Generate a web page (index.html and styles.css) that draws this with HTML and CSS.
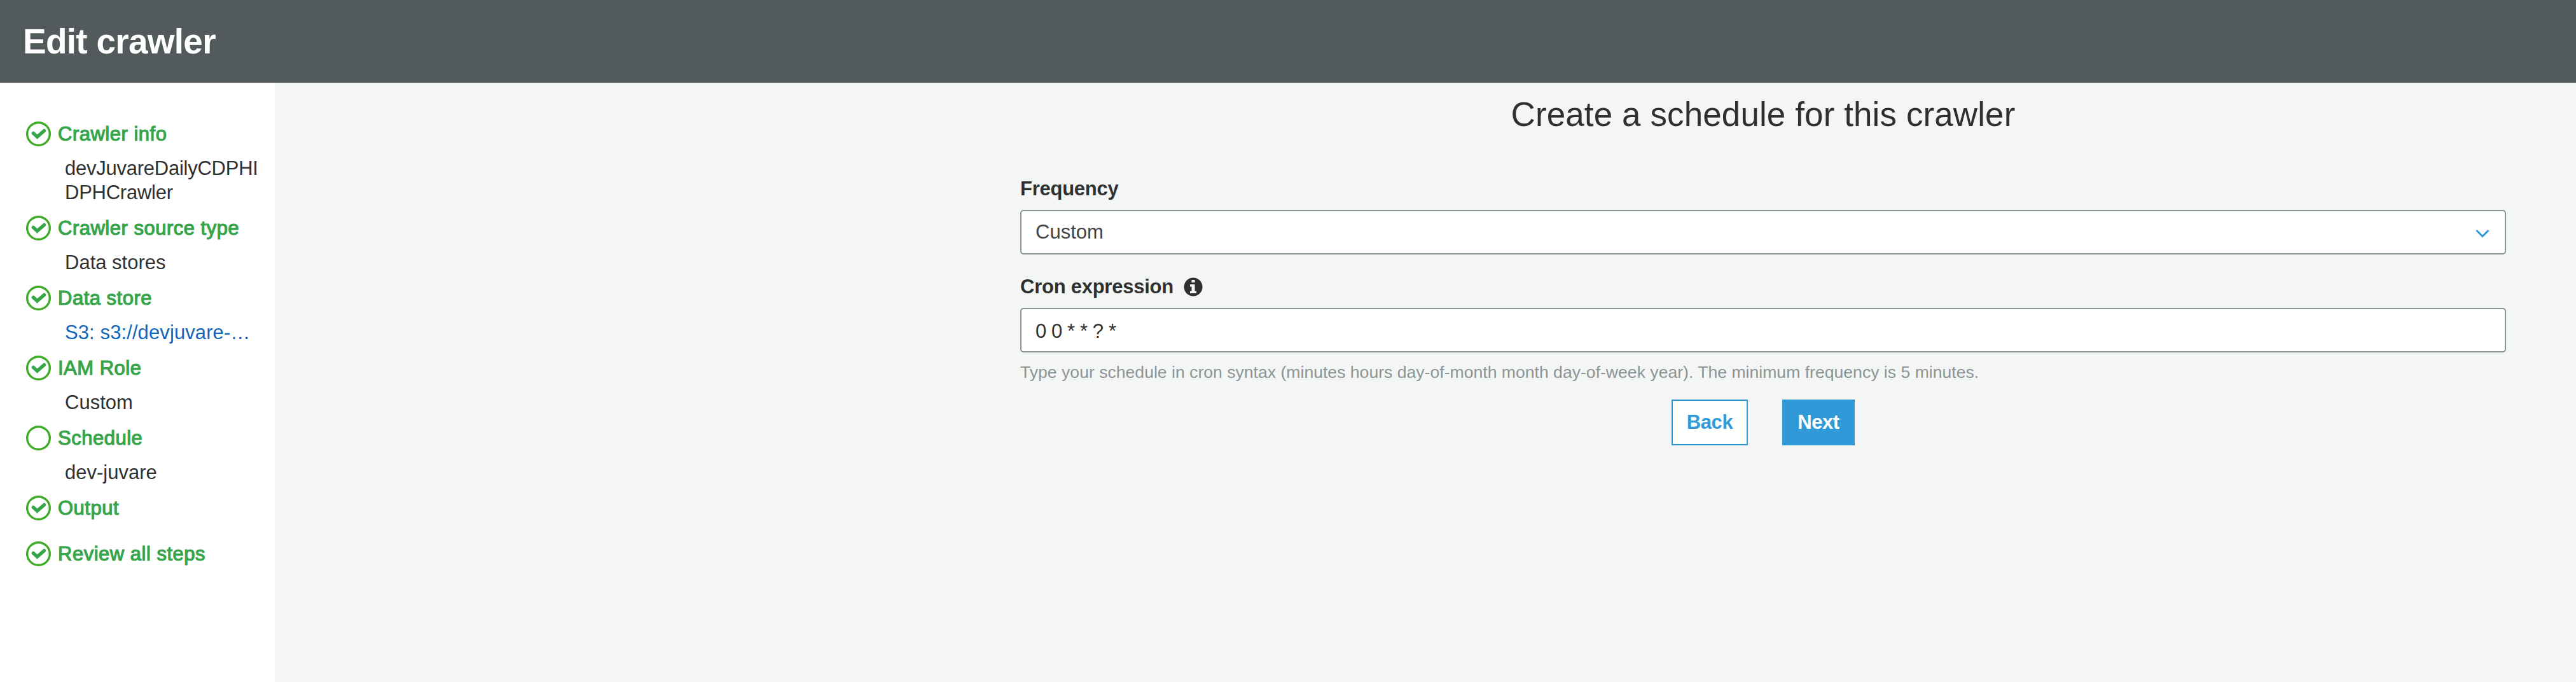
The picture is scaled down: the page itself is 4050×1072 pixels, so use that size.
FILE: index.html
```html
<!DOCTYPE html>
<html lang="en">
<head>
<meta charset="utf-8">
<title>Edit crawler</title>
<link rel="stylesheet" href="styles.css">
</head>
<body>
<svg class="sprite" width="0" height="0" aria-hidden="true">
  <symbol id="ring" viewBox="0 0 40 40"><circle cx="20.5" cy="19.5" r="17.8" fill="none" stroke="#3fab28" stroke-width="3.4"/></symbol>
  <symbol id="done" viewBox="0 0 40 40"><circle cx="20.5" cy="19.5" r="17.8" fill="none" stroke="#3fab28" stroke-width="3.4"/><path d="M12.500 18.500l6 5.500L29.500 14.500" fill="none" stroke="#37a54a" stroke-width="5.500" stroke-linecap="round"/></symbol>
</svg>
<header class="topbar"><h1 class="title">Edit crawler</h1></header>
<div class="layout">
  <nav class="sidebar">
    <section class="step">
      <h2 class="step-name"><svg class="mark"><use href="#done"/></svg>Crawler info</h2>
      <p class="detail crawler-name">devJuvareDailyCDPHI<br>DPHCrawler</p>
    </section>
    <section class="step">
      <h2 class="step-name"><svg class="mark"><use href="#done"/></svg>Crawler source type</h2>
      <p class="detail">Data stores</p>
    </section>
    <section class="step">
      <h2 class="step-name"><svg class="mark"><use href="#done"/></svg>Data store</h2>
      <p class="detail"><a class="link">S3: s3://devjuvare-…</a></p>
    </section>
    <section class="step">
      <h2 class="step-name"><svg class="mark"><use href="#done"/></svg>IAM Role</h2>
      <p class="detail">Custom</p>
    </section>
    <section class="step">
      <h2 class="step-name"><svg class="mark"><use href="#ring"/></svg>Schedule</h2>
      <p class="detail">dev-juvare</p>
    </section>
    <section class="step">
      <h2 class="step-name"><svg class="mark"><use href="#done"/></svg>Output</h2>
      <p class="detail"></p>
    </section>
    <section class="step">
      <h2 class="step-name"><svg class="mark"><use href="#done"/></svg>Review all steps</h2>
      <p class="detail"></p>
    </section>
  </nav>
  <main class="main">
    <h2 class="heading">Create a schedule for this crawler</h2>
    <div class="label">Frequency</div>
    <div class="field select">Custom<svg class="chevron" viewBox="0 0 22 14"><path d="M1.500 2L11 11.500l9.500-9.500" fill="none" stroke="#3099d8" stroke-width="3"/></svg></div>
    <div class="label">Cron expression<svg class="info" viewBox="0 0 30 30"><circle cx="15" cy="15" r="14.500" fill="#2f3130"/><path d="M12.500 4h5v4h-5zM10 11h7.500v10.500H20v3.500H10v-3.500h2.500v-7H10z" fill="#f4f6f6"/></svg></div>
    <div class="field expression">0 0 * * ? *</div>
    <p class="help">Type your schedule in cron syntax (minutes hours day-of-month month day-of-week year). The minimum frequency is 5 minutes.</p>
    <div class="actions"><button class="btn">Back</button><button class="btn primary">Next</button></div>
  </main>
</div>
</body>
</html>
```
FILE: styles.css
```css
* { box-sizing: border-box; }
body {
  margin: 0;
  height: 1072px;
  display: flex;
  flex-direction: column;
  font: 31px/38px "Liberation Sans", Arial, sans-serif;
  color: #2f3130;
  background: #f4f6f6;
}
h1, h2, p { margin: 0; font-weight: 400; }
.sprite { display: none; }
.topbar { height: 130px; padding-left: 36px; display: flex; align-items: center; background: #535a5c; color: #fff; }
.title { font-size: 55px; line-height: 64px; font-weight: 700; letter-spacing: -0.75px; }
.layout { flex: 1; display: flex; }
.sidebar { width: 432px; padding: 62px 0 0 40px; background: #fff; }
.step { padding-bottom: 18px; }
.step-name { display: flex; align-items: center; gap: 11px; font-size: 31px; letter-spacing: 0.5px; color: #37a54a; -webkit-text-stroke: 1.2px #37a54a; }
.mark { width: 40px; height: 40px; margin: -1px 0; }
.detail { margin-top: 16px; padding-left: 62px; white-space: nowrap; }
.crawler-name { letter-spacing: -0.25px; }
.link { color: #1166bb; letter-spacing: 0.1px; }
.main { flex: 1; padding: 20px 110px 0 1172px; }
.heading { font-size: 53px; line-height: 60px; letter-spacing: 0.1px; text-align: center; }
.label { display: flex; align-items: center; gap: 16px; font-weight: 700; letter-spacing: -0.25px; margin-top: 68px; }
.info { width: 30px; height: 30px; }
.field { height: 70px; margin-top: 14px; padding: 0 24px 0 22px; border: 2px solid #899294; border-radius: 5px; background: #fff; display: flex; align-items: center; justify-content: space-between; }
.select { color: #444; }
.select + .label { margin-top: 32px; }
.expression { padding-top: 4px; letter-spacing: -0.4px; }
.chevron { width: 22px; height: 14px; margin-top: 4px; }
.help { margin-top: 14px; font-size: 26.6px; line-height: 34px; color: #8c9494; }
.actions { display: flex; justify-content: center; gap: 54px; margin-top: 26px; }
.btn { height: 72px; width: 120px; padding: 0; border: 2px solid #3099d8; background: #fff; color: #3099d8; font: 700 31px/38px "Liberation Sans", Arial, sans-serif; letter-spacing: -0.4px; }
.primary { width: 114px; background: #3099d8; color: #fff; }
```
